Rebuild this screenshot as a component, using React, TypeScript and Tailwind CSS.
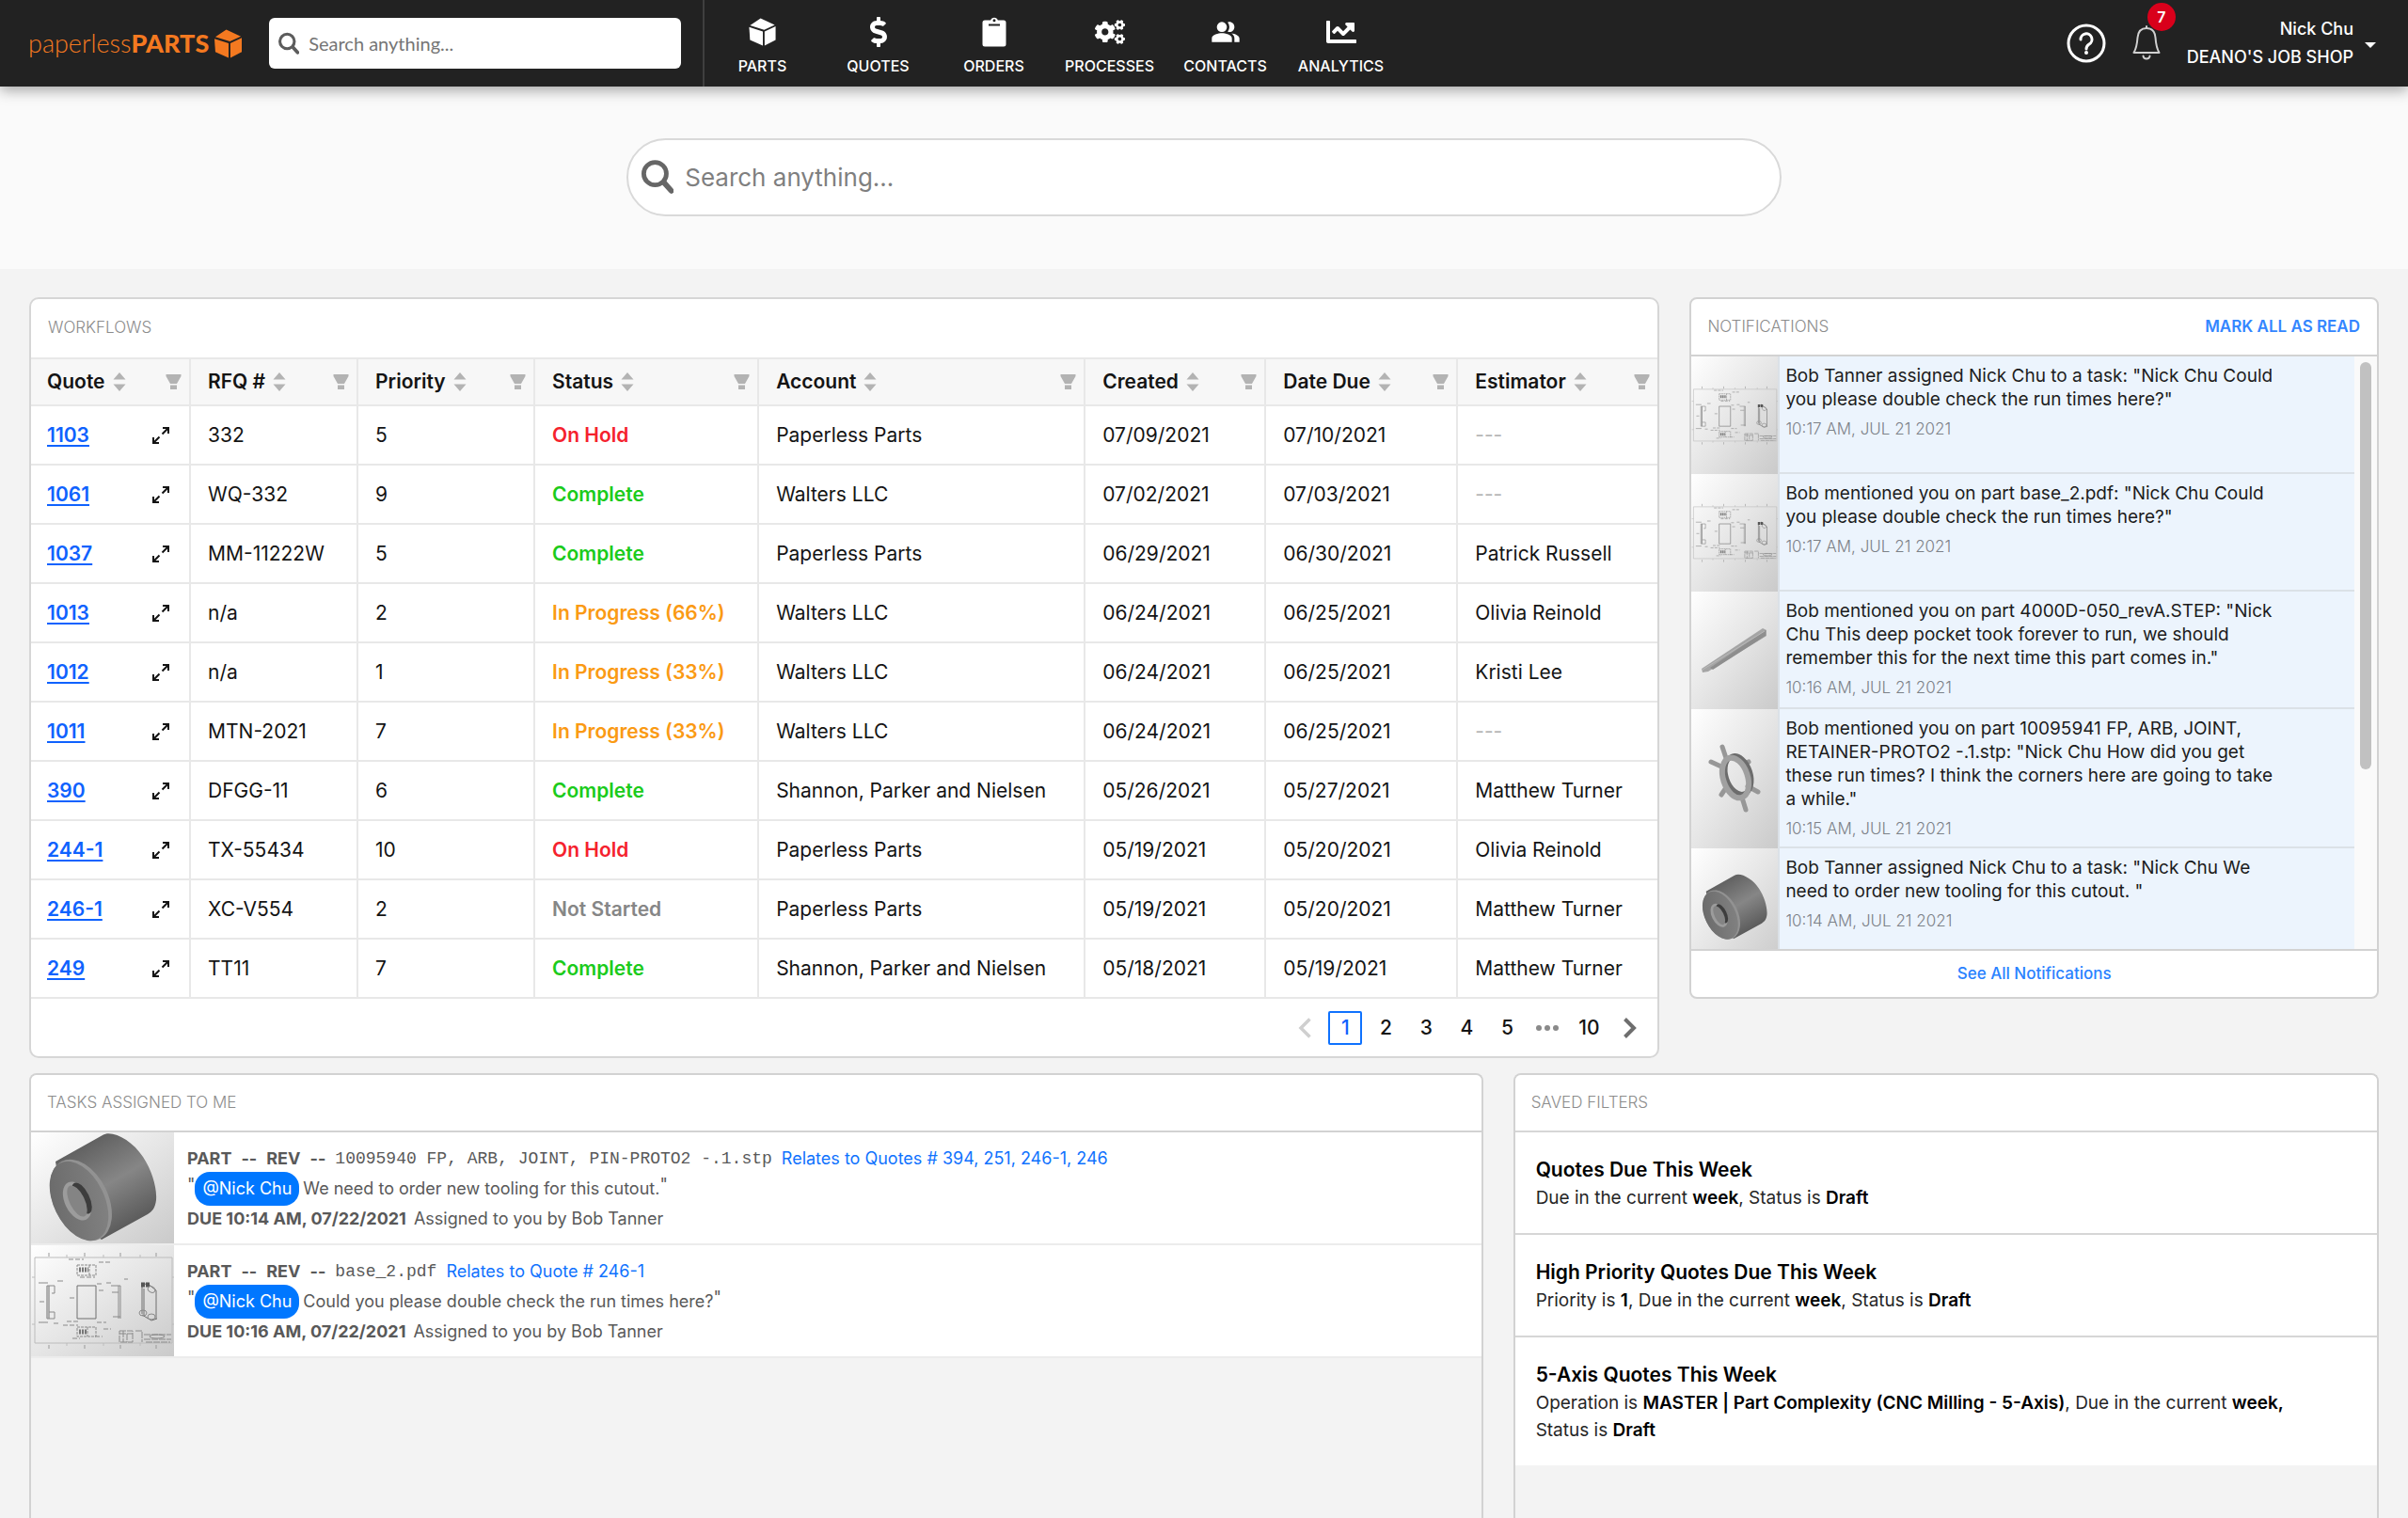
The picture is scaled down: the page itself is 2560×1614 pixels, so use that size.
import { useState } from 'react';
import type { ReactNode } from 'react';
import { FaChartLine, FaCogs, FaDollarSign } from 'react-icons/fa';
import { MdPeopleAlt } from 'react-icons/md';

type Part = 'drawing' | 'rod' | 'ring' | 'bushing';

const statusColors: Record<string, string> = {
  'On Hold': 'text-[#f5222d]',
  Complete: 'text-[#1bcb1b]',
  'In Progress (66%)': 'text-[#fa9a14]',
  'In Progress (33%)': 'text-[#fa9a14]',
  'Not Started': 'text-[#868686]',
};

const columns = [
  { label: 'Quote', width: 'w-[168px]' },
  { label: 'RFQ #', width: 'w-[178px]' },
  { label: 'Priority', width: 'w-[188px]' },
  { label: 'Status', width: 'w-[238px]' },
  { label: 'Account', width: 'w-[347px]' },
  { label: 'Created', width: 'w-[192px]' },
  { label: 'Date Due', width: 'w-[204px]' },
  { label: 'Estimator', width: 'w-[214px]' },
];

const quotes = [
  ['1103', '332', '5', 'On Hold', 'Paperless Parts', '07/09/2021', '07/10/2021', ''],
  ['1061', 'WQ-332', '9', 'Complete', 'Walters LLC', '07/02/2021', '07/03/2021', ''],
  ['1037', 'MM-11222W', '5', 'Complete', 'Paperless Parts', '06/29/2021', '06/30/2021', 'Patrick Russell'],
  ['1013', 'n/a', '2', 'In Progress (66%)', 'Walters LLC', '06/24/2021', '06/25/2021', 'Olivia Reinold'],
  ['1012', 'n/a', '1', 'In Progress (33%)', 'Walters LLC', '06/24/2021', '06/25/2021', 'Kristi Lee'],
  ['1011', 'MTN-2021', '7', 'In Progress (33%)', 'Walters LLC', '06/24/2021', '06/25/2021', ''],
  ['390', 'DFGG-11', '6', 'Complete', 'Shannon, Parker and Nielsen', '05/26/2021', '05/27/2021', 'Matthew Turner'],
  ['244-1', 'TX-55434', '10', 'On Hold', 'Paperless Parts', '05/19/2021', '05/20/2021', 'Olivia Reinold'],
  ['246-1', 'XC-V554', '2', 'Not Started', 'Paperless Parts', '05/19/2021', '05/20/2021', 'Matthew Turner'],
  ['249', 'TT11', '7', 'Complete', 'Shannon, Parker and Nielsen', '05/18/2021', '05/19/2021', 'Matthew Turner'],
];

const notifications: { part: Part; text: string; time: string }[] = [
  {
    part: 'drawing',
    text: 'Bob Tanner assigned Nick Chu to a task: "Nick Chu Could you please double check the run times here?"',
    time: '10:17 AM, JUL 21 2021',
  },
  {
    part: 'drawing',
    text: 'Bob mentioned you on part base_2.pdf: "Nick Chu Could you please double check the run times here?"',
    time: '10:17 AM, JUL 21 2021',
  },
  {
    part: 'rod',
    text: 'Bob mentioned you on part 4000D-050_revA.STEP: "Nick Chu This deep pocket took forever to run, we should remember this for the next time this part comes in."',
    time: '10:16 AM, JUL 21 2021',
  },
  {
    part: 'ring',
    text: 'Bob mentioned you on part 10095941 FP, ARB, JOINT, RETAINER-PROTO2 -.1.stp: "Nick Chu How did you get these run times? I think the corners here are going to take a while."',
    time: '10:15 AM, JUL 21 2021',
  },
  {
    part: 'bushing',
    text: 'Bob Tanner assigned Nick Chu to a task: "Nick Chu We need to order new tooling for this cutout. "',
    time: '10:14 AM, JUL 21 2021',
  },
];

const tasks: { part: Part; file: string; relates: string; message: string; due: string }[] = [
  {
    part: 'bushing',
    file: '10095940 FP, ARB, JOINT, PIN-PROTO2 -.1.stp',
    relates: 'Relates to Quotes # 394, 251, 246-1, 246',
    message: 'We need to order new tooling for this cutout.',
    due: 'DUE 10:14 AM, 07/22/2021',
  },
  {
    part: 'drawing',
    file: 'base_2.pdf',
    relates: 'Relates to Quote # 246-1',
    message: 'Could you please double check the run times here?',
    due: 'DUE 10:16 AM, 07/22/2021',
  },
];

const CubeIcon = ({ className }: { className: string }) => (
  <svg viewBox="0 0 30 32" className={className} fill="currentColor" aria-hidden="true">
    <path d="M13 .5 29 8 17 13.500 1 8.500Z" />
    <path d="M0 10.500 15.500 15.500V31.500L1 25Z" />
    <path d="M17.500 15.500 30 9.500V25L17.500 31.500Z" />
  </svg>
);

const ClipboardIcon = () => (
  <svg viewBox="0 0 26 32" className="h-8 w-[26px]" aria-hidden="true">
    <path
      fill="currentColor"
      fillRule="evenodd"
      d="M3 3.500h6.200a4 4 0 0 1 7.600 0H23a2.500 2.500 0 0 1 2.500 2.500v23a2.500 2.500 0 0 1-2.500 2.500H3A2.500 2.500 0 0 1 .5 29V6A2.500 2.500 0 0 1 3 3.500Zm10-1.300a1.500 1.500 0 1 0 0 3 1.500 1.500 0 0 0 0-3ZM7 7.500V9.500h12V7.500Z"
    />
  </svg>
);

const SearchIcon = ({ className }: { className: string }) => (
  <svg viewBox="0 0 36 38" className={className} fill="none" stroke="currentColor" aria-hidden="true">
    <circle cx="15" cy="15" r="12.500" strokeWidth="5" />
    <path d="m25 25 8 9" strokeWidth="6" strokeLinecap="round" />
  </svg>
);

const HelpIcon = () => (
  <svg viewBox="0 0 42 42" className="size-[42px]" fill="none" stroke="currentColor" aria-hidden="true">
    <circle cx="21" cy="21" r="19" strokeWidth="3" />
    <path d="M15 17a6 6 0 1 1 9 5c-2 1.300-3 2.200-3 5" strokeWidth="3" strokeLinecap="round" />
    <circle cx="21" cy="31" r="2" fill="currentColor" stroke="none" />
  </svg>
);

const BellIcon = () => (
  <svg viewBox="0 0 30 38" className="h-[38px] w-[30px]" fill="none" stroke="currentColor" strokeWidth="2" aria-hidden="true">
    <path d="M15 3c-6 0-9 4.500-9.500 10-.5 7-1 11-4 16h27c-3-5-3.500-9-4-16C24 7.500 21 3 15 3Z" strokeLinejoin="round" />
    <path d="M15 3V1M11.500 32.500a3.500 3 0 0 0 7 0" strokeLinecap="round" />
  </svg>
);

const ExpandIcon = () => (
  <svg viewBox="0 0 20 20" className="size-5" fill="none" stroke="currentColor" strokeWidth="2" aria-hidden="true">
    <path d="M12 2h6v6M18 2l-6.500 6.500M2 12v6h6M2 18l6.500-6.500" />
  </svg>
);

const SortIcon = () => (
  <svg viewBox="0 0 14 20" className="h-5 w-3.5 text-[#b3b3b3]" fill="currentColor" aria-hidden="true">
    <path d="M7 0 13.500 7.500H.5ZM7 20 .5 12.500h13Z" />
  </svg>
);

const FilterIcon = () => (
  <svg viewBox="0 0 17 17" className="size-[17px] text-[#b3b3b3]" fill="currentColor" aria-hidden="true">
    <path d="M.5 0h16v2l-4.500 8h-7L.5 2ZM5 11.500h7V16H5Z" />
  </svg>
);

const PartArt = ({ part }: { part: Part }) => {
  if (part === 'drawing') {
    return (
      <svg viewBox="0 0 152 118" className="w-full" fill="none" stroke="#8a8a8a" strokeWidth="1" aria-hidden="true">
        <path stroke="#bcbcbc" d="M4 13h146v91H4ZM38 13v-3M77 13v-3M116 13v-3M38 104v3M77 104v3M116 104v3M1 34h3M1 84h3M150 34h3M150 84h3" />
        <path stroke="#999999" d="M19 8v4M57 8v4M95 8v4M133 8v4M19 106v4M57 106v4M95 106v4M133 106v4" />
        <path stroke="#6f6f6f" d="M49 43h20v35H49ZM17 43v35M19 43v35" />
        <path d="M17 43h8v8h-3M19 71h6v7h-8M8 40h10M28 38h6M8 82h10M24 83h5M9 60h5" />
        <path d="M93 43v35M95 43v35M85 43h10M86 50h7M87 76h8M80 40h5M99 36h4" />
        <path stroke="#6f6f6f" d="M118 44v29M120 46v28M133 48v30M118 44l5-4 10 8M118 74l10 6 6-2" />
        <path stroke="#777777" strokeWidth="5" strokeDasharray="2 1" d="M51 26h10M51 92h9" />
        <path d="M49 21h20v11H49ZM49 87h20v10H49ZM62 21v11M60 87v10" strokeDasharray="3 1" />
        <path strokeDasharray="5 2" d="M40 15h16M72 18h12M52 34h16M38 81h12M34 85h16M70 82h10M77 89h8M68 97h8M44 99h8M41 56h5M72 48h5M70 41h6" />
        <path stroke="#555555" strokeWidth="5" strokeDasharray="4 1" d="M117 42h9" />
        <ellipse cx="128" cy="47" rx="4" ry="3" transform="rotate(30 128 47)" />
        <ellipse cx="119" cy="72" rx="4" ry="3" />
        <ellipse cx="128" cy="76" rx="4" ry="3" />
        <path d="M94 91h14v12H94ZM94 94h14M98 91v12M102 94v9M111 91h7v12M120 95h29M120 100h29M122 103h26" strokeDasharray="7 1" />
        <ellipse cx="134" cy="97" rx="8" ry="2" />
      </svg>
    );
  }
  if (part === 'rod') {
    return (
      <svg viewBox="0 0 92 92" className="w-full" aria-hidden="true">
        <path fill="#a5a5a5" d="M11 65 76 22l4 2v6L18 68l-6 1Z" />
        <path fill="#8e8e8e" d="M20 64 79 24v6L23 66Z" />
        <path fill="none" stroke="#b9b9b9" d="M12 66 78 25" />
      </svg>
    );
  }
  if (part === 'ring') {
    return (
      <svg viewBox="0 0 92 92" className="w-full" aria-hidden="true">
        <path
          stroke="#979797"
          strokeWidth="5"
          strokeLinecap="round"
          d="M37 24 33 12M54 66l4 13M34 34l-13-6M56 31l5-3M38 54l-6 9M60 54l11 6"
        />
        <ellipse cx="50" cy="42" rx="13" ry="21" fill="none" stroke="#6c6c6c" strokeWidth="5" transform="rotate(-18 50 42)" />
        <ellipse cx="47" cy="45" rx="13" ry="22" fill="none" stroke="#a0a0a0" strokeWidth="6" transform="rotate(-18 47 45)" />
      </svg>
    );
  }
  return (
    <svg viewBox="0 0 152 118" className="w-full" aria-hidden="true">
      <defs>
        <linearGradient id="bushing-body" x1="0.200" y1="0" x2="0.750" y2="1">
          <stop offset="0" stopColor="#565656" />
          <stop offset="0.500" stopColor="#868686" />
          <stop offset="1" stopColor="#4f4f4f" />
        </linearGradient>
        <linearGradient id="bushing-face" x1="0" y1="0" x2="1" y2="0.600">
          <stop offset="0" stopColor="#686868" />
          <stop offset="1" stopColor="#808080" />
        </linearGradient>
      </defs>
      <path fill="url(#bushing-body)" d="M26 31 76 3c10-6 31 5 43 23 10 15 15 34 14 46-1 8-4 12-9 15L75 114C50 100 30 60 26 31Z" />
      <ellipse cx="53" cy="72" rx="29" ry="46" fill="#929292" transform="rotate(-26 53 72)" />
      <ellipse cx="51" cy="73" rx="27" ry="45" fill="url(#bushing-face)" transform="rotate(-26 51 73)" />
      <ellipse cx="49" cy="73" rx="13" ry="22" fill="#9c9c9c" transform="rotate(-26 49 73)" />
      <ellipse cx="54" cy="70" rx="8" ry="18" fill="#3d3d3d" transform="rotate(-26 54 70)" />
      <ellipse cx="49" cy="73" rx="8" ry="18" fill="#848484" transform="rotate(-26 49 73)" />
    </svg>
  );
};

const Thumbnail = ({ part, className }: { part: Part; className: string }) => (
  <div className={`flex shrink-0 items-center justify-center bg-linear-to-br from-white via-[#e6e6e6] to-[#cacaca] ${className}`}>
    <PartArt part={part} />
  </div>
);

const NavItem = ({ icon, label }: { icon: ReactNode; label: string }) => (
  <a href="#" className="flex w-[123px] flex-col items-center pt-4 text-white">
    <span className="flex h-9 items-center">{icon}</span>
    <span className="mt-2 text-base leading-5 font-medium">{label}</span>
  </a>
);

const CardTitle = ({ children }: { children: ReactNode }) => (
  <h2 className="text-[17px] font-light text-[#8c8c8c]">{children}</h2>
);

const Header = () => (
  <header className="relative z-10 flex h-[92px] items-stretch bg-[#222222] text-white shadow-[0_4px_14px_rgba(0,0,0,0.35)]">
    <div className="flex w-[749px] shrink-0 items-center border-r-2 border-[#3f3f3f] pl-[30px]">
      <a href="#" className="flex w-64 shrink-0 items-center gap-1.5 font-['Lato',sans-serif] text-[27px] text-[#f47920]">
        <span>
          <span className="font-light">paperless</span>
          <span className="font-black">PARTS</span>
        </span>
        <CubeIcon className="h-[31px] w-[29px]" />
      </a>
      <label className="flex h-[54px] w-[438px] items-center gap-2.5 rounded-md bg-white pl-2.5 text-[#5c5c5c]">
        <SearchIcon className="h-[25px] w-6" />
        <input
          type="text"
          aria-label="Search"
          placeholder="Search anything..."
          className="w-full font-['Lato',sans-serif] text-xl text-black outline-none placeholder:text-[#757575]"
        />
      </label>
    </div>
    <nav className="flex">
      <NavItem icon={<CubeIcon className="h-[30px] w-[29px]" />} label="PARTS" />
      <NavItem icon={<FaDollarSign className="size-8" />} label="QUOTES" />
      <NavItem icon={<ClipboardIcon />} label="ORDERS" />
      <NavItem icon={<FaCogs className="size-8" />} label="PROCESSES" />
      <NavItem icon={<MdPeopleAlt className="size-8" />} label="CONTACTS" />
      <NavItem icon={<FaChartLine className="size-8" />} label="ANALYTICS" />
    </nav>
    <div className="ml-auto flex items-center pr-[34px]">
      <button type="button" aria-label="Help">
        <HelpIcon />
      </button>
      <button type="button" aria-label="Notifications" className="relative ml-7 text-[#d0d0d0]">
        <BellIcon />
        <span className="absolute -top-6 left-4 flex size-[30px] items-center justify-center rounded-full bg-[#d9001b] text-base font-semibold text-white">
          7
        </span>
      </button>
      <button type="button" className="ml-7 flex items-center gap-3">
        <span className="text-right text-[18px] leading-[30px] font-medium">
          Nick Chu
          <br />
          DEANO'S JOB SHOP
        </span>
        <span className="mt-1 border-x-6 border-t-6 border-x-transparent border-t-white" />
      </button>
    </div>
  </header>
);

const Workflows = () => {
  const [page, setPage] = useState(1);

  return (
    <section className="overflow-hidden rounded-[10px] border-2 border-[#d6d6d6] bg-white">
      <div className="flex h-[62px] items-center px-[18px]">
        <CardTitle>WORKFLOWS</CardTitle>
      </div>
      <table className="w-full table-fixed border-separate border-spacing-0 text-[21px]">
        <thead>
          <tr>
            {columns.map((column, i) => (
              <th
                key={column.label}
                className={`h-[52px] border-y-2 border-[#e8e8e8] bg-[#f7f7f7] pr-2 text-left font-semibold ${column.width} ${i ? 'border-l-2 pl-[18px]' : 'pl-[17px]'}`}
              >
                <div className="flex items-center">
                  <button type="button" className="flex items-center gap-2 whitespace-nowrap">
                    {column.label}
                    <SortIcon />
                  </button>
                  <button type="button" aria-label={`Filter ${column.label}`} className="ml-auto">
                    <FilterIcon />
                  </button>
                </div>
              </th>
            ))}
          </tr>
        </thead>
        <tbody>
          {quotes.map(([quote, rfq, priority, status, account, created, due, estimator]) => (
            <tr key={quote} className="[&>td]:h-[63px] [&>td]:border-b-2 [&>td]:border-[#e8e8e8] [&>td+td]:border-l-2 [&>td+td]:pl-[18px]">
              <td className="pr-5 pl-[17px]">
                <div className="flex items-center justify-between">
                  <a href="#" className="font-semibold text-[#0f62fe] underline decoration-2 underline-offset-3">
                    {quote}
                  </a>
                  <button type="button" aria-label={`Expand ${quote}`}>
                    <ExpandIcon />
                  </button>
                </div>
              </td>
              <td>{rfq}</td>
              <td>{priority}</td>
              <td className={`font-semibold ${statusColors[status]}`}>{status}</td>
              <td>{account}</td>
              <td>{created}</td>
              <td>{due}</td>
              <td className={estimator ? '' : 'text-[#b3b3b3]'}>{estimator || '---'}</td>
            </tr>
          ))}
        </tbody>
      </table>
      <div className="flex h-[61px] items-center justify-end gap-[7px] pr-[11px] text-[21px] font-medium">
        <button type="button" aria-label="Previous page" className="flex size-9 items-center justify-center text-[#cfcfcf]">
          <svg viewBox="0 0 14 22" className="h-[22px] w-3.5" fill="none" stroke="currentColor" strokeWidth="3.500">
            <path d="M12.500 1.500 3 11l9.500 9.500" />
          </svg>
        </button>
        {[1, 2, 3, 4, 5].map((n) => (
          <button
            key={n}
            type="button"
            onClick={() => setPage(n)}
            className={`size-9 rounded-xs ${n === page ? 'border-2 border-[#0f72fe] text-[#0f62fe]' : ''}`}
          >
            {n}
          </button>
        ))}
        <span className="flex size-9 items-center justify-center gap-[3px]">
          <i className="size-1.5 rounded-full bg-[#8a8a8a]" />
          <i className="size-1.5 rounded-full bg-[#8a8a8a]" />
          <i className="size-1.5 rounded-full bg-[#8a8a8a]" />
        </span>
        <button type="button" className="h-9 w-[38px]" onClick={() => setPage(10)}>
          10
        </button>
        <button type="button" aria-label="Next page" className="flex size-9 items-center justify-center text-[#6e6e6e]">
          <svg viewBox="0 0 14 22" className="h-[22px] w-3.5" fill="none" stroke="currentColor" strokeWidth="4">
            <path d="M1.500 1.500 11 11l-9.500 9.500" />
          </svg>
        </button>
      </div>
    </section>
  );
};

const Notifications = () => (
  <section className="overflow-hidden rounded-lg border-2 border-[#d2d2d2] bg-white">
    <div className="flex h-[61px] items-center justify-between border-b-2 border-[#d2d2d2] pr-[18px] pl-[17px]">
      <CardTitle>NOTIFICATIONS</CardTitle>
      <button type="button" className="text-[17px] font-semibold text-[#3386ff]">
        MARK ALL AS READ
      </button>
    </div>
    <div className="flex h-[632px] overflow-hidden border-b-2 border-[#d2d2d2]">
      <ul className="min-w-0 flex-1">
        {notifications.map((item, i) => (
          <li key={i} className="flex min-h-[125px]">
            <Thumbnail part={item.part} className="w-[92px]" />
            <div className="flex-1 border-b-2 border-l-2 border-[#dbe1e7] bg-[#ecf4fd] pt-2 pr-[76px] pb-2 pl-1.5">
              <p className="text-[19px] leading-[25px] text-[#1c1c1c]">{item.text}</p>
              <p className="mt-2 text-[17px] leading-[22px] font-light text-[#7c8188]">{item.time}</p>
            </div>
          </li>
        ))}
      </ul>
      <div className="w-6 bg-[#fafafa] px-1.5 pt-1.5">
        <div className="h-[433px] rounded-full bg-[#c1c1c1]" />
      </div>
    </div>
    <div className="flex h-[49px] items-center justify-center">
      <a href="#" className="text-[17px] font-medium text-[#2a82ff]">
        See All Notifications
      </a>
    </div>
  </section>
);

const Tasks = () => (
  <section className="overflow-hidden rounded-t-lg border-2 border-b-0 border-[#d2d2d2]">
    <div className="flex h-[61px] items-center border-b-2 border-[#d2d2d2] bg-white px-[17px]">
      <CardTitle>TASKS ASSIGNED TO ME</CardTitle>
    </div>
    <ul>
      {tasks.map((task) => (
        <li key={task.file} className="flex h-[120px] border-b-2 border-[#ececec] bg-white text-[18px] leading-8 text-[#595959]">
          <Thumbnail part={task.part} className="w-[152px]" />
          <div className="pt-3 pl-3.5">
            <p className="flex items-center gap-2.5">
              <span className="flex gap-2.5 font-bold">
                <span>PART</span>
                <span>--</span>
                <span>REV</span>
                <span>--</span>
              </span>
              <span className="font-['Liberation_Mono',monospace]">{task.file}</span>
              <a href="#" className="text-[#0f72fe]">
                {task.relates}
              </a>
            </p>
            <p className="flex h-8 items-center">
              <span className="self-start leading-6">"</span>
              <span className="mr-1 flex h-9 shrink-0 items-center rounded-2xl bg-[#0077ff] px-2 text-white">@Nick Chu</span>
              {task.message}
              <span className="self-start leading-6">"</span>
            </p>
            <p>
              <b className="mr-2 font-bold">{task.due}</b>
              Assigned to you by Bob Tanner
            </p>
          </div>
        </li>
      ))}
    </ul>
  </section>
);

const SavedFilter = ({ title, children }: { title: string; children: ReactNode }) => (
  <li className="border-t-2 border-[#d6d6d6] bg-white pt-[25px] pr-16 pb-[23px] pl-[22px] text-black">
    <h3 className="text-[21px] leading-[30px] font-semibold">{title}</h3>
    <p className="text-[19px] leading-[29px] text-[#262626] [&_b]:font-semibold [&_b]:text-black">{children}</p>
  </li>
);

const SavedFilters = () => (
  <section className="overflow-hidden rounded-t-lg border-2 border-b-0 border-[#d2d2d2]">
    <div className="flex h-[59px] items-center bg-white px-[17px]">
      <CardTitle>SAVED FILTERS</CardTitle>
    </div>
    <ul>
      <SavedFilter title="Quotes Due This Week">
        Due in the current <b>week</b>, Status is <b>Draft</b>
      </SavedFilter>
      <SavedFilter title="High Priority Quotes Due This Week">
        Priority is <b>1</b>, Due in the current <b>week</b>, Status is <b>Draft</b>
      </SavedFilter>
      <SavedFilter title="5-Axis Quotes This Week">
        Operation is <b>MASTER | Part Complexity (CNC Milling - 5-Axis)</b>, Due in the current <b>week,</b>{' '}
        <span>
          Status is <b>Draft</b>
        </span>
      </SavedFilter>
    </ul>
  </section>
);

const App = () => {
  return (
    <div className="flex min-h-screen flex-col bg-[#f3f3f3] font-['Inter',sans-serif] text-[#141414]">
      <Header />
      <div className="flex h-[194px] justify-center bg-[#fafafa] pt-[55px]">
        <label className="flex h-[83px] w-[48%] items-center gap-3 rounded-full border-2 border-[#d9d9d9] bg-white pl-3.5 text-[#666666]">
          <SearchIcon className="h-[37px] w-9" />
          <input
            type="text"
            aria-label="Search anything"
            placeholder="Search anything..."
            className="w-full text-[26px] text-black outline-none placeholder:text-[#7f7f7f]"
          />
        </label>
      </div>
      <main className="flex flex-1 flex-col gap-4 px-[31px] pt-[30px]">
        <div className="grid grid-cols-[1732fr_732fr] items-start gap-8">
          <Workflows />
          <Notifications />
        </div>
        <div className="grid flex-1 grid-cols-[1545fr_920fr] gap-8">
          <Tasks />
          <SavedFilters />
        </div>
      </main>
    </div>
  );
};

export default App;
